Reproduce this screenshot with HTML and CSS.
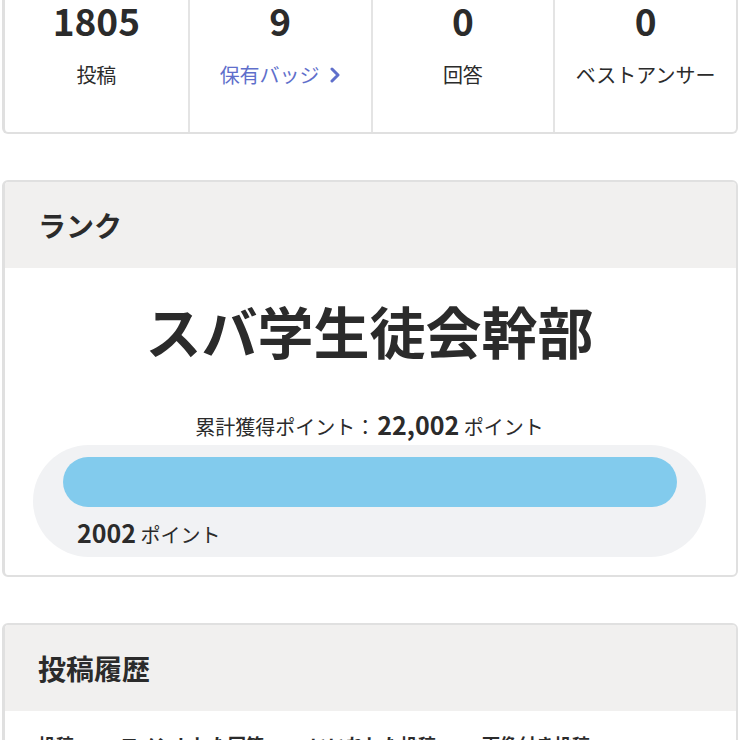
FILE: index.html
```
<!DOCTYPE html>
<html lang="ja">
<head>
<meta charset="utf-8">
<link rel="stylesheet" href="styles.css">
</head>
<body>
<div class="page">
  <section class="card stats">
    <div class="stat">
      <div class="num">1805</div>
      <div class="label">投稿</div>
    </div>
    <div class="stat">
      <div class="num">9</div>
      <div class="label link">保有バッジ<svg class="chev" viewBox="0 0 12 16" width="12" height="16"><path d="M3 2 L9 8 L3 14" fill="none" stroke="currentColor" stroke-width="3" stroke-linecap="round" stroke-linejoin="round"/></svg></div>
    </div>
    <div class="stat">
      <div class="num">0</div>
      <div class="label">回答</div>
    </div>
    <div class="stat">
      <div class="num">0</div>
      <div class="label">ベストアンサー</div>
    </div>
  </section>

  <section class="card rank">
    <header class="card-head"><h2>ランク</h2></header>
    <div class="rank-body">
      <div class="rank-name">スバ学生徒会幹部</div>
      <div class="total">累計獲得ポイント：<b>22,002</b> ポイント</div>
      <div class="progress">
        <div class="bar"></div>
        <div class="cur"><b>2002</b> ポイント</div>
      </div>
    </div>
  </section>

  <section class="card history">
    <header class="card-head"><h2>投稿履歴</h2></header>
    <nav class="tabs">
      <span>投稿</span>
      <span>コメントした回答</span>
      <span>いいねした投稿</span>
      <span>画像付き投稿</span>
    </nav>
  </section>
</div>
</body>
</html>
```
FILE: styles.css
```
* { box-sizing: border-box; }
html, body { margin: 0; padding: 0; background: #fff; }
body {
  font-family: "Noto Sans CJK JP", "Noto Sans", sans-serif;
  color: #2b2b2b;
  overflow: hidden;
}
.page { padding: 0 2px 0 2px; }

.card {
  border: 2px solid #e0e0e0;
  border-left-width: 3px;
  border-radius: 6px;
  background: #fff;
  overflow: hidden;
}

.stats {
  display: grid;
  grid-template-columns: repeat(4, 1fr);
  border-top: none;
  border-top-left-radius: 0;
  border-top-right-radius: 0;
}
.stat {
  text-align: center;
  padding-bottom: 42px;
  border-left: 2px solid #e4e4e4;
}
.stat:first-child { border-left: none; }
.num {
  font-size: 37px;
  font-weight: 700;
  line-height: 40px;
}
.label {
  margin-top: 20px;
  font-size: 20px;
  line-height: 30px;
  display: flex;
  justify-content: center;
  align-items: center;
}
.link { color: #5f6fcb; }
.chev { margin-left: 9px; }

.rank { margin-top: 46px; }
.card-head {
  background: #f1f0ef;
  padding: 23px 33px;
}
.card-head h2 {
  margin: 0;
  font-size: 28px;
  line-height: 40px;
  font-weight: 700;
}
.rank-body {
  padding: 27px 30px 18px 28px;
  text-align: center;
}
.rank-name {
  font-size: 56px;
  font-weight: 700;
  line-height: 70px;
}
.total {
  margin-top: 44px;
  font-size: 20px;
  line-height: 30px;
}
.total b { font-size: 25px; font-weight: 700; margin-left: 2px; }
.progress {
  margin-top: 3px;
  background: #f1f2f4;
  border-radius: 56px;
  padding: 12px 29px 7px 30px;
  text-align: left;
}
.bar {
  height: 50px;
  border-radius: 25px;
  background: #82cbed;
}
.cur {
  margin-top: 10px;
  padding-left: 14px;
  font-size: 20px;
  line-height: 30px;
}
.cur b { font-size: 25px; font-weight: 700; }

.history { margin-top: 46px; }
.tabs {
  display: flex;
  gap: 46px;
  padding: 18px 33px;
  font-size: 18px;
  font-weight: 700;
  line-height: 30px;
}
```
